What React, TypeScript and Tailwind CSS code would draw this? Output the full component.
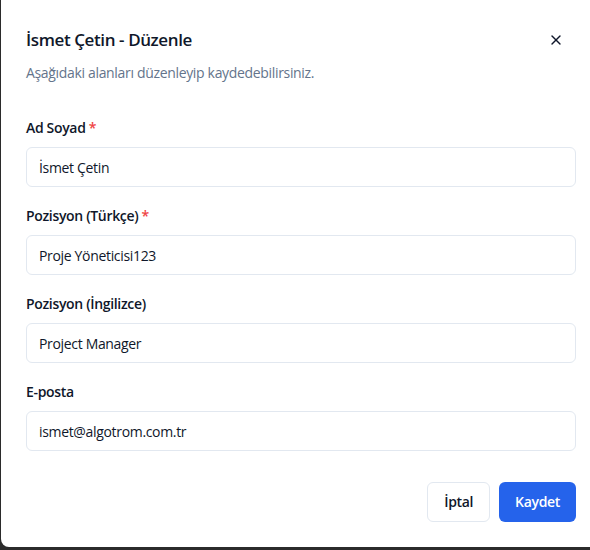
import { X } from "lucide-react";

const fields = [
  { label: "Ad Soyad", required: true, value: "İsmet Çetin" },
  { label: "Pozisyon (Türkçe)", required: true, value: "Proje Yöneticisi123" },
  { label: "Pozisyon (İngilizce)", required: false, value: "Project Manager" },
  { label: "E-posta", required: false, value: "ismet@algotrom.com.tr" },
];

export default function App() {
  return (
    <div
      className="w-[590px] h-[550px] bg-[#2b2b2b] overflow-hidden tracking-[-0.33px]"
      style={{ fontFamily: '"Open Sans", "Noto Sans", sans-serif' }}
    >
      <div className="ml-px h-[547px] w-[620px] bg-white rounded-bl-lg pt-[26px] pl-[25px]">
        <div className="w-[550px]">
          {/* Header */}
          <div className="flex items-center justify-between">
            <h2 className="text-[17px] font-semibold leading-7 tracking-[-0.4px] text-[#0f172a]">
              İsmet Çetin - Düzenle
            </h2>
            <button className="mr-[12px] text-[#0f172a]">
              <X className="w-4 h-4" strokeWidth={2} />
            </button>
          </div>
          <p className="mt-[9px] text-sm leading-5 text-[#64748b]">
            Aşağıdaki alanları düzenleyip kaydedebilirsiniz.
          </p>

          {/* Form */}
          <div className="mt-[35px] flex flex-col gap-[19px]">
            {fields.map((f) => (
              <div key={f.label} className="flex flex-col gap-[9px]">
                <label className="text-sm leading-5 font-semibold text-[#0f172a]">
                  {f.label}
                  {f.required && <span className="text-[#ef4444]"> *</span>}
                </label>
                <input
                  defaultValue={f.value}
                  className="h-10 w-full rounded-md border border-[#e2e8f0] px-3 text-sm tracking-[-0.33px] text-[#0f172a] outline-none"
                />
              </div>
            ))}
          </div>

          {/* Footer */}
          <div className="mt-[31px] flex justify-end gap-[9px]">
            <button className="h-10 px-4 rounded-md border border-[#e2e8f0] bg-white text-sm font-semibold text-[#0f172a]">
              İptal
            </button>
            <button className="h-10 px-4 rounded-md bg-[#2563eb] text-sm font-semibold text-white">
              Kaydet
            </button>
          </div>
        </div>
      </div>
    </div>
  );
}
